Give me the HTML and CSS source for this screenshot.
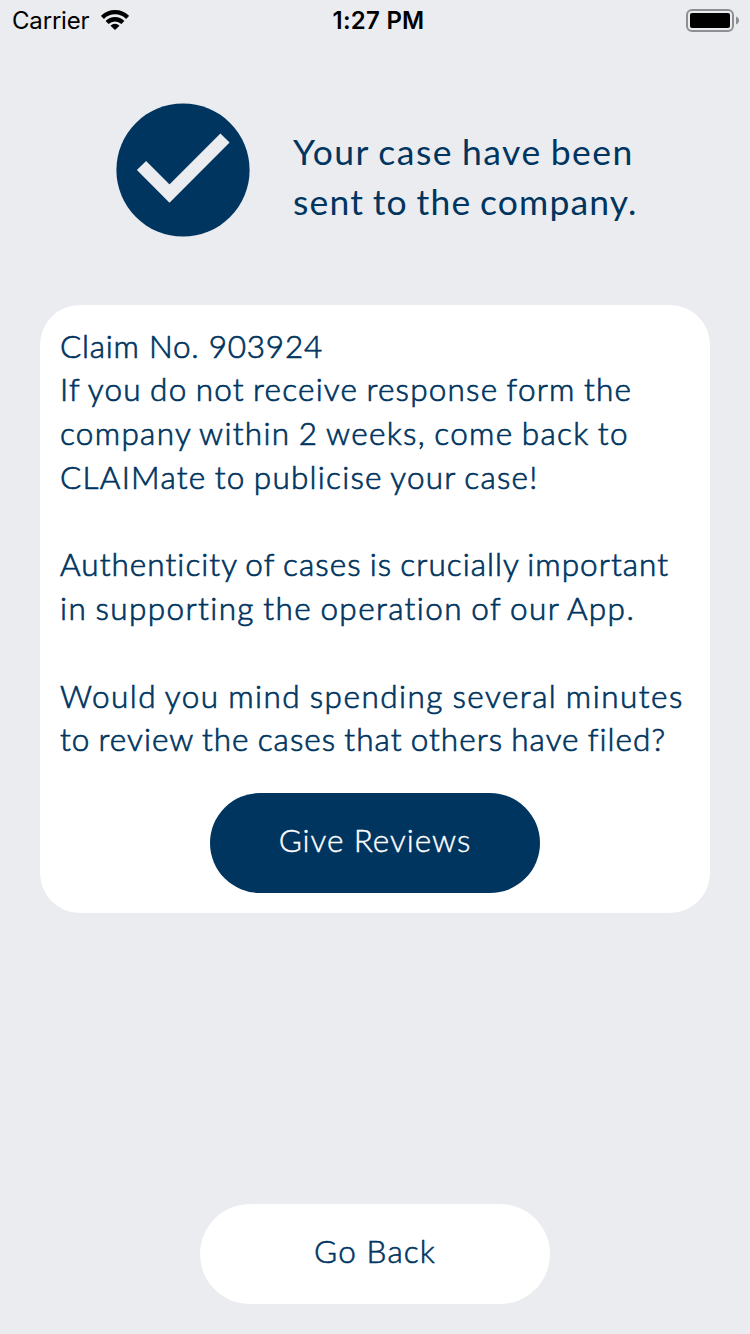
FILE: index.html
```html
<!DOCTYPE html>
<html lang="en">
<head>
<meta charset="utf-8">
<title>CLAIMate</title>
<link rel="stylesheet" href="styles.css">
</head>
<body>
<div class="screen">
  <header class="status">
    <div class="status-left"><span class="carrier">Carrier</span>
      <svg class="wifi" width="28" height="20" viewBox="0 0 28 20"><g fill="none" stroke="#000" stroke-width="4.300"><path d="M1.4 7.4A17.8 17.8 0 0 1 26.6 7.4"/><path d="M6.1 12.5A11.2 11.2 0 0 1 21.9 12.5"/></g><path d="M9.5 15.700a6.2 6.2 0 0 1 9 0L14 20z"/></svg>
    </div>
    <span class="time">1:27 PM</span>
    <svg class="battery" width="53" height="23" viewBox="0 0 53 23"><rect x="1" y="1" width="46" height="21" rx="5" fill="none" stroke="#8e8f92" stroke-width="2"/><rect x="4" y="4" width="40" height="15" rx="2"/><path d="M50 7.5q3 1.200 3 4t-3 4z" fill="#8e8f92"/></svg>
  </header>
  <section class="hero">
    <svg class="check" width="134" height="134" viewBox="0 0 134 134"><circle cx="67" cy="67" r="66.600" fill="#00355f"/><path d="M25.500 62.500L53.500 90.500L109 35" fill="none" stroke="#ebecf0" stroke-width="13"/></svg>
    <h1 class="title"><span class="line t1">Your case have been</span><span class="line t2">sent to the company.</span></h1>
  </section>
  <main class="card">
    <p class="copy"><span class="line c1">Claim No. 903924</span><span class="line c2">If you do not receive response form the</span><span class="line c3">company within 2 weeks, come back to</span><span class="line c4">CLAIMate to publicise your case!</span></p>
    <p class="copy"><span class="line c5">Authenticity of cases is crucially important</span><span class="line c6">in supporting the operation of our App.</span></p>
    <p class="copy"><span class="line c7">Would you mind spending several minutes</span><span class="line c8">to review the cases that others have filed?</span></p>
    <button class="button primary"><span class="line b1">Give Reviews</span></button>
  </main>
  <button class="button secondary"><span class="line b2">Go Back</span></button>
</div>
</body>
</html>
```
FILE: styles.css
```css
* { box-sizing: border-box; }
body { margin: 0; background: #ebecf0; }
.screen { display: flex; flex-direction: column; align-items: center; width: 750px; height: 1334px; padding-bottom: 30px; font-family: Lato, sans-serif; color: #00355f; }

.status { display: grid; grid-template-columns: 1fr auto 1fr; align-items: center; width: 100%; height: 40px; padding: 0 11px 0 12px; font-family: Inter, sans-serif; font-size: 24px; color: #000; }
.status-left { display: flex; align-items: center; gap: 12px; }
.carrier { letter-spacing: -0.18px; }
.time { padding-left: 6px; font-weight: 600; letter-spacing: 0.25px; }
.battery { justify-self: end; }

.hero { display: flex; align-items: center; gap: 43px; width: 100%; height: 134px; margin-top: 63px; padding-left: 116px; }
.title { margin: 0; padding-top: 14px; font-size: 35.500px; font-weight: 400; line-height: 50px; word-spacing: -1.5px; }
.line { display: block; width: max-content; white-space: nowrap; font-variant-ligatures: none; }

.card { display: flex; flex-direction: column; width: 670px; height: 608px; margin-top: 68px; padding: 19.600px 20px 20px; border-radius: 40px; background: #fff; }
.copy { margin: 0 0 43.600px; font-size: 31.500px; font-weight: 300; line-height: 43.800px; word-spacing: -1.5px; -webkit-text-stroke: 0.7px; }
.copy:last-of-type { margin-bottom: 0; }

.button { display: flex; flex-shrink: 0; align-items: center; justify-content: center; height: 100px; padding: 0 0 7px; border: 0; border-radius: 50px; font: 300 31.500px Lato, sans-serif; }
.primary { align-self: center; width: 330px; margin-top: auto; background: #00355f; color: #fff; -webkit-text-stroke: 0.4px; }
.secondary { width: 350px; margin-top: auto; background: #fff; color: #00355f; -webkit-text-stroke: 0.6px; }

/* Per-line tracking */
.t1 { letter-spacing: 1.48px; }
.t2 { letter-spacing: 1.15px; }
.c1 { letter-spacing: 0.76px; word-spacing: 0; }
.c2 { letter-spacing: 1.22px; }
.c3 { letter-spacing: 1.31px; }
.c4 { letter-spacing: 1.25px; }
.c5 { letter-spacing: 1.05px; }
.c6 { letter-spacing: 1.39px; }
.c7 { letter-spacing: 1.49px; }
.c8 { letter-spacing: 1.05px; }
.b1 { letter-spacing: 0.95px; }
.b2 { letter-spacing: 1.15px; }
```
